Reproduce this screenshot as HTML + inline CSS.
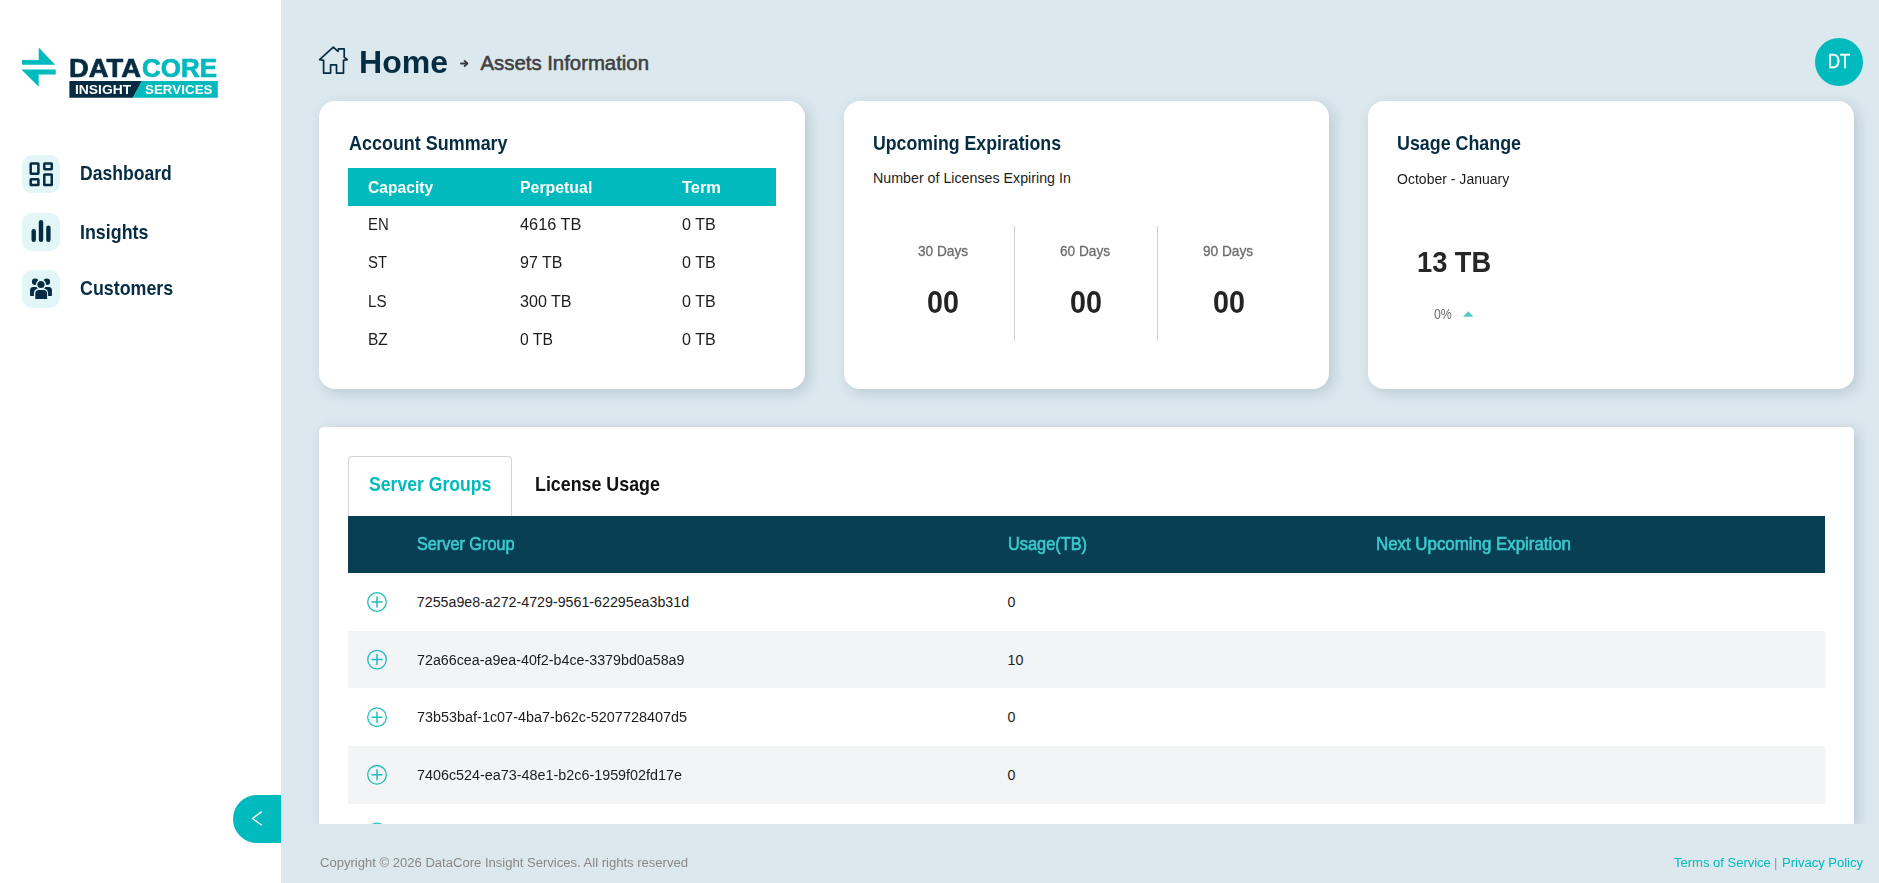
<!DOCTYPE html>
<html>
<head>
<meta charset="utf-8">
<style>
html,body{margin:0;padding:0;}
body{width:1879px;height:883px;overflow:hidden;position:relative;background:#dbe8ee;font-family:"Liberation Sans",sans-serif;}
.abs{position:absolute;}
.t{position:absolute;white-space:pre;line-height:1;transform-origin:0 0;}
.side{position:absolute;left:0;top:0;width:281px;height:883px;background:#fff;}
.navbox{position:absolute;left:22px;width:38px;height:38px;border-radius:10px;background:#e3f6f7;}
.card{position:absolute;top:101px;height:288px;background:#fff;border-radius:16px;box-shadow:4px 4px 13px rgba(30,60,80,0.17);}
.bigcard{position:absolute;left:319px;top:427px;width:1535px;height:397px;background:#fff;border-radius:5px 5px 0 0;box-shadow:4px 3px 13px rgba(30,60,80,0.17);overflow:hidden;}
</style>
</head>
<body>
<div class="side"></div>

<!-- logo arrows -->
<svg class="abs" style="left:0;top:0" width="281" height="110" viewBox="0 0 281 110">
  <polygon points="22,60 38.7,60 38.7,47.4 55.1,64.8 22,64.8" fill="#00babd"/>
  <polygon points="21.4,69.5 55.7,69.5 55.7,74.6 38.7,74.6 38.7,86.7" fill="#00babd"/>
  <polygon points="69.4,81 142,81 133,97.8 69.4,97.8" fill="#052c42"/>
  <polygon points="142,81 217.8,81 217.8,97.8 133,97.8" fill="#00babd"/>
</svg>

<!-- nav boxes -->
<div class="navbox" style="top:155px"></div>
<div class="navbox" style="top:213px"></div>
<div class="navbox" style="top:270px"></div>
<svg class="abs" style="left:0;top:140px" width="80" height="180" viewBox="0 140 80 180">
  <!-- dashboard icon -->
  <g fill="none" stroke="#052c42" stroke-width="2.5" stroke-linejoin="round">
    <rect x="30.7" y="163.45" width="7.7" height="10.2" rx="0.4"/>
    <rect x="44.3" y="163.45" width="7.45" height="5.7" rx="0.4"/>
    <rect x="30.7" y="179.25" width="7.7" height="5.8" rx="0.4"/>
    <rect x="44.3" y="174.45" width="7.45" height="10.6" rx="0.4"/>
  </g>
  <!-- insights bars -->
  <g stroke="#052c42" stroke-width="4.4" stroke-linecap="round">
    <line x1="33.7" y1="231.2" x2="33.7" y2="239.8"/>
    <line x1="41" y1="222.2" x2="41" y2="239.8"/>
    <line x1="48.4" y1="227.7" x2="48.4" y2="239.8"/>
  </g>
  <!-- customers -->
  <defs>
    <mask id="cm" maskUnits="userSpaceOnUse" x="0" y="140" width="80" height="180">
      <rect x="0" y="140" width="80" height="180" fill="#fff"/>
      <circle cx="41" cy="284.5" r="5.1" fill="#000"/>
      <path d="M33.9,301 L33.9,293.5 Q33.9,288.7 38.7,288.7 L43.3,288.7 Q48.1,288.7 48.1,293.5 L48.1,301 Z" fill="#000"/>
    </mask>
  </defs>
  <g fill="#052c42" mask="url(#cm)">
    <circle cx="35.2" cy="281.8" r="3.3"/>
    <circle cx="46.8" cy="281.8" r="3.3"/>
    <path d="M30.1,295.9 L30.1,290.2 Q30.1,286.9 33.4,286.9 L37.6,286.9 L37.6,295.9 Z"/>
    <path d="M51.9,295.9 L51.9,290.2 Q51.9,286.9 48.6,286.9 L44.4,286.9 L44.4,295.9 Z"/>
  </g>
  <g fill="#052c42">
    <circle cx="41" cy="284.5" r="3.6"/>
    <path d="M35.3,299 L35.3,293.6 Q35.3,290.1 38.8,290.1 L43.6,290.1 Q47.1,290.1 47.1,293.6 L47.1,299 Z"/>
  </g>
</svg>

<!-- collapse button -->
<div class="abs" style="left:233px;top:795px;width:48px;height:48px;border-radius:24px 0 0 24px;background:#00babd;"></div>
<svg class="abs" style="left:233px;top:795px" width="48" height="48" viewBox="233 795 48 48">
  <polyline points="261.8,811.6 252.5,818.4 261.8,825.3" fill="none" stroke="#fff" stroke-width="1.4"/>
</svg>

<!-- header home icon + arrow -->
<svg class="abs" style="left:300px;top:30px" width="200" height="60" viewBox="300 30 200 60">
  <polygon points="333.3,47.2 319.6,59.7 323.6,60.4 323.6,73.1 330.6,73.1 330.6,64.9 336.5,64.9 336.5,73.1 343.5,73.1 343.5,60.4 347.2,59.7 344.2,57.2 344.2,48.8 338.5,48.8 338,51.3" fill="none" stroke="#052c42" stroke-width="1.7" stroke-linejoin="round"/>
  <line x1="461" y1="63.5" x2="467" y2="63.5" stroke="#3a3a3a" stroke-width="1.9" stroke-linecap="round"/>
  <polyline points="464.6,60.9 467.3,63.5 464.6,66.1" fill="none" stroke="#3a3a3a" stroke-width="1.9" stroke-linecap="round" stroke-linejoin="round"/>
</svg>

<!-- avatar -->
<div class="abs" style="left:1815px;top:38px;width:48px;height:48px;border-radius:50%;background:#00babd;"></div>

<!-- cards -->
<div class="card" style="left:319px;width:486px;"></div>
<div class="card" style="left:844px;width:485px;"></div>
<div class="card" style="left:1368px;width:486px;"></div>

<!-- card1 table header -->
<div class="abs" style="left:348px;top:168px;width:428px;height:38px;background:#00babd;"></div>

<!-- card2 dividers -->
<div class="abs" style="left:1014px;top:226px;width:1px;height:115px;background:#cfcfcf;"></div>
<div class="abs" style="left:1157px;top:226px;width:1px;height:115px;background:#cfcfcf;"></div>

<!-- card3 triangle -->
<svg class="abs" style="left:1460px;top:308px" width="16" height="12" viewBox="1460 308 16 12">
  <polygon points="1463,316.8 1468.2,311.3 1473.4,316.8" fill="#4fcacd"/>
</svg>

<!-- big card -->
<div class="bigcard">
  <div class="abs" style="left:29px;top:29px;width:162px;height:60px;border:1px solid #d4d4d4;border-bottom:none;border-radius:4px 4px 0 0;box-sizing:border-box;width:164px;"></div>
  <div class="abs" style="left:29px;top:89px;width:1477px;height:57px;background:#083f55;"></div>
  <div class="abs" style="left:29px;top:204px;width:1477px;height:57px;background:#f3f4f6;"></div>
  <div class="abs" style="left:29px;top:319px;width:1477px;height:58px;background:#f3f4f6;"></div>
  <svg class="abs" style="left:0;top:0" width="1535" height="397" viewBox="319 427 1535 397">
    <g fill="none" stroke="#1fbcbf" stroke-width="1.3">
      <circle cx="377" cy="602" r="9.3"/>
      <circle cx="377" cy="659.6" r="9.3"/>
      <circle cx="377" cy="717.2" r="9.3"/>
      <circle cx="377" cy="774.8" r="9.3"/>
      <circle cx="377" cy="832.4" r="9.3"/>
    </g>
    <g stroke="#1fbcbf" stroke-width="1.5">
      <path d="M377,596.5 V607.5 M371.5,602 H382.5"/>
      <path d="M377,654.1 V665.1 M371.5,659.6 H382.5"/>
      <path d="M377,711.7 V722.7 M371.5,717.2 H382.5"/>
      <path d="M377,769.3 V780.3 M371.5,774.8 H382.5"/>
    </g>
  </svg>
</div>

<div class="abs" style="left:281px;top:824px;width:1598px;height:59px;background:#dbe8ee;"></div>
<div class="t" style="left:68.80px;top:54.60px;font-size:26.45px;font-weight:700;color:#052c42;transform:scaleX(1.0345);-webkit-text-stroke:0.7px #052c42;">DATA</div>
<div class="t" style="left:141.80px;top:54.60px;font-size:26.45px;font-weight:700;color:#00babd;transform:scaleX(0.9818);-webkit-text-stroke:0.7px #00babd;">CORE</div>
<div class="t" style="left:75.20px;top:83.59px;font-size:12.65px;font-weight:700;color:#fff;transform:scaleX(1.0959);">INSIGHT</div>
<div class="t" style="left:144.50px;top:83.59px;font-size:12.65px;font-weight:700;color:#fff;transform:scaleX(1.0596);">SERVICES</div>
<div class="t" style="left:80.00px;top:163.02px;font-size:20.64px;font-weight:700;color:#052c42;transform:scaleX(0.8521);">Dashboard</div>
<div class="t" style="left:80.00px;top:221.72px;font-size:20.64px;font-weight:700;color:#052c42;transform:scaleX(0.8650);">Insights</div>
<div class="t" style="left:80.00px;top:277.82px;font-size:20.64px;font-weight:700;color:#052c42;transform:scaleX(0.8650);">Customers</div>
<div class="t" style="left:359.00px;top:46.65px;font-size:31.83px;font-weight:700;color:#052c42;transform:scaleX(1.0064);">Home</div>
<div class="t" style="left:480.50px;top:53.17px;font-size:20.35px;font-weight:400;color:#404040;-webkit-text-stroke:0.55px #404040;">Assets Information</div>
<div class="t" style="left:1827.70px;top:51.17px;font-size:20.35px;font-weight:400;color:#fff;transform:scaleX(0.8221);-webkit-text-stroke:0.3px #fff;">DT</div>
<div class="t" style="left:348.50px;top:133.17px;font-size:20.35px;font-weight:700;color:#052c42;transform:scaleX(0.8823);">Account Summary</div>
<div class="t" style="left:367.70px;top:179.20px;font-size:17.01px;font-weight:700;color:#fff;transform:scaleX(0.9213);">Capacity</div>
<div class="t" style="left:520.00px;top:179.20px;font-size:17.01px;font-weight:700;color:#fff;transform:scaleX(0.9331);">Perpetual</div>
<div class="t" style="left:682.00px;top:179.20px;font-size:17.01px;font-weight:700;color:#fff;transform:scaleX(0.9674);">Term</div>
<div class="t" style="left:367.70px;top:217.32px;font-size:16.86px;font-weight:400;color:#1c1c1c;transform:scaleX(0.8838);">EN</div>
<div class="t" style="left:520.00px;top:217.32px;font-size:16.86px;font-weight:400;color:#1c1c1c;transform:scaleX(0.9679);">4616 TB</div>
<div class="t" style="left:682.00px;top:217.32px;font-size:16.86px;font-weight:400;color:#1c1c1c;transform:scaleX(0.9543);">0 TB</div>
<div class="t" style="left:367.70px;top:255.42px;font-size:16.86px;font-weight:400;color:#1c1c1c;transform:scaleX(0.8818);">ST</div>
<div class="t" style="left:520.00px;top:255.42px;font-size:16.86px;font-weight:400;color:#1c1c1c;transform:scaleX(0.9488);">97 TB</div>
<div class="t" style="left:682.00px;top:255.42px;font-size:16.86px;font-weight:400;color:#1c1c1c;transform:scaleX(0.9543);">0 TB</div>
<div class="t" style="left:367.70px;top:294.12px;font-size:16.86px;font-weight:400;color:#1c1c1c;transform:scaleX(0.8970);">LS</div>
<div class="t" style="left:520.00px;top:294.12px;font-size:16.86px;font-weight:400;color:#1c1c1c;transform:scaleX(0.9545);">300 TB</div>
<div class="t" style="left:682.00px;top:294.12px;font-size:16.86px;font-weight:400;color:#1c1c1c;transform:scaleX(0.9543);">0 TB</div>
<div class="t" style="left:367.70px;top:332.12px;font-size:16.86px;font-weight:400;color:#1c1c1c;transform:scaleX(0.9189);">BZ</div>
<div class="t" style="left:520.00px;top:332.12px;font-size:16.86px;font-weight:400;color:#1c1c1c;transform:scaleX(0.9317);">0 TB</div>
<div class="t" style="left:682.00px;top:332.12px;font-size:16.86px;font-weight:400;color:#1c1c1c;transform:scaleX(0.9543);">0 TB</div>
<div class="t" style="left:872.80px;top:133.12px;font-size:20.06px;font-weight:700;color:#052c42;transform:scaleX(0.8837);">Upcoming Expirations</div>
<div class="t" style="left:873.00px;top:171.44px;font-size:14.24px;font-weight:400;color:#1c1c1c;">Number of Licenses Expiring In</div>
<div class="t" style="left:917.75px;top:244.36px;font-size:14.1px;font-weight:400;color:#6b6b6b;transform:scaleX(0.9690);-webkit-text-stroke:0.3px #6b6b6b;">30 Days</div>
<div class="t" style="left:927.00px;top:287.14px;font-size:31.25px;font-weight:700;color:#242424;transform:scaleX(0.9204);">00</div>
<div class="t" style="left:1060.25px;top:244.36px;font-size:14.1px;font-weight:400;color:#6b6b6b;transform:scaleX(0.9690);-webkit-text-stroke:0.3px #6b6b6b;">60 Days</div>
<div class="t" style="left:1069.50px;top:287.14px;font-size:31.25px;font-weight:700;color:#242424;transform:scaleX(0.9204);">00</div>
<div class="t" style="left:1203.25px;top:244.36px;font-size:14.1px;font-weight:400;color:#6b6b6b;transform:scaleX(0.9690);-webkit-text-stroke:0.3px #6b6b6b;">90 Days</div>
<div class="t" style="left:1212.50px;top:287.14px;font-size:31.25px;font-weight:700;color:#242424;transform:scaleX(0.9204);">00</div>
<div class="t" style="left:1396.70px;top:133.32px;font-size:20.06px;font-weight:700;color:#052c42;transform:scaleX(0.8904);">Usage Change</div>
<div class="t" style="left:1396.70px;top:171.84px;font-size:14.24px;font-weight:400;color:#1c1c1c;transform:scaleX(0.9856);">October - January</div>
<div class="t" style="left:1417.40px;top:248.19px;font-size:29.07px;font-weight:700;color:#262626;transform:scaleX(0.9374);">13 TB</div>
<div class="t" style="left:1433.60px;top:307.72px;font-size:13.8px;font-weight:400;color:#6e6e6e;transform:scaleX(0.8921);">0%</div>
<div class="t" style="left:368.70px;top:474.42px;font-size:20.06px;font-weight:700;color:#00babd;transform:scaleX(0.8781);">Server Groups</div>
<div class="t" style="left:534.70px;top:474.42px;font-size:20.06px;font-weight:700;color:#111;transform:scaleX(0.8896);">License Usage</div>
<div class="t" style="left:416.60px;top:535.53px;font-size:17.44px;font-weight:400;color:#3cc8cb;transform:scaleX(0.9315);-webkit-text-stroke:0.65px #3cc8cb;">Server Group</div>
<div class="t" style="left:1007.50px;top:535.53px;font-size:17.44px;font-weight:400;color:#3cc8cb;transform:scaleX(0.9370);-webkit-text-stroke:0.65px #3cc8cb;">Usage(TB)</div>
<div class="t" style="left:1376.30px;top:535.53px;font-size:17.44px;font-weight:400;color:#3cc8cb;transform:scaleX(0.9673);-webkit-text-stroke:0.65px #3cc8cb;">Next Upcoming Expiration</div>
<div class="t" style="left:416.80px;top:595.24px;font-size:14.24px;font-weight:400;color:#1c1c1c;">7255a9e8-a272-4729-9561-62295ea3b31d</div>
<div class="t" style="left:1007.50px;top:595.24px;font-size:14.24px;font-weight:400;color:#1c1c1c;">0</div>
<div class="t" style="left:416.80px;top:652.84px;font-size:14.24px;font-weight:400;color:#1c1c1c;transform:scaleX(1.0029);">72a66cea-a9ea-40f2-b4ce-3379bd0a58a9</div>
<div class="t" style="left:1007.50px;top:652.84px;font-size:14.24px;font-weight:400;color:#1c1c1c;">10</div>
<div class="t" style="left:416.80px;top:710.44px;font-size:14.24px;font-weight:400;color:#1c1c1c;transform:scaleX(1.0122);">73b53baf-1c07-4ba7-b62c-5207728407d5</div>
<div class="t" style="left:1007.50px;top:710.44px;font-size:14.24px;font-weight:400;color:#1c1c1c;">0</div>
<div class="t" style="left:416.80px;top:768.04px;font-size:14.24px;font-weight:400;color:#1c1c1c;transform:scaleX(1.0084);">7406c524-ea73-48e1-b2c6-1959f02fd17e</div>
<div class="t" style="left:1007.50px;top:768.04px;font-size:14.24px;font-weight:400;color:#1c1c1c;">0</div>
<div class="t" style="left:319.70px;top:855.75px;font-size:13.52px;font-weight:400;color:#8b8784;transform:scaleX(0.9657);">Copyright © 2026 DataCore Insight Services. All rights reserved</div>
<div class="t" style="left:1673.70px;top:855.95px;font-size:13.52px;font-weight:400;color:#00babd;transform:scaleX(0.9623);">Terms of Service</div>
<div class="t" style="left:1774.41px;top:855.95px;font-size:13.52px;font-weight:400;color:#9a8fa0;transform:scaleX(0.9623);">|</div>
<div class="t" style="left:1781.65px;top:855.95px;font-size:13.52px;font-weight:400;color:#00babd;transform:scaleX(0.9623);">Privacy Policy</div>
</body>
</html>
